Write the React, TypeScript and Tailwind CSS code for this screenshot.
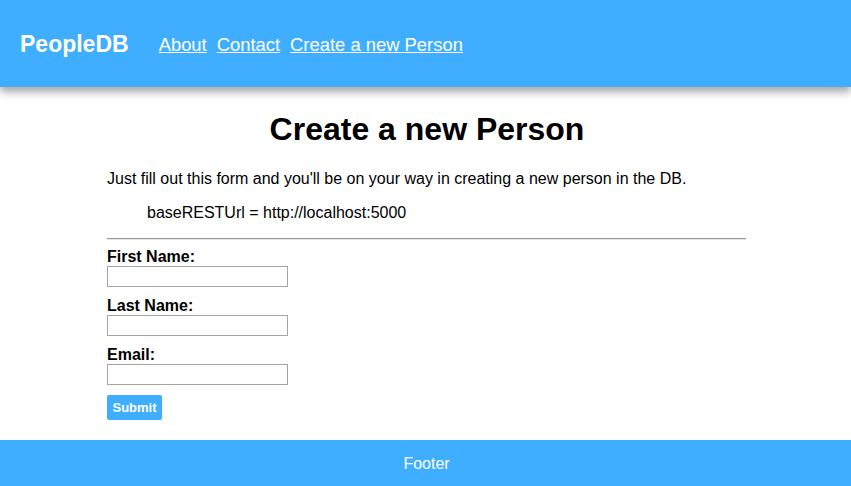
import React from 'react';

const App = () => {
  return <div className="min-h-screen bg-white text-black font-['Liberation_Sans',Arial,sans-serif]">
      <header className="relative z-10 h-[87px] bg-[#40aeff] flex items-center px-[20px] shadow-[0_5px_8px_rgba(0,0,0,0.35)]">
        <h1 className="text-[23px] font-bold text-white mr-[30px] pt-[1px]">PeopleDB</h1>
        <nav className="flex gap-[10px] text-[18.4px] text-white pt-[3px]">
          <a href="#" className="underline">About</a>
          <a href="#" className="underline">Contact</a>
          <a href="#" className="underline">Create a new Person</a>
        </nav>
      </header>
      <main className="w-[639px] ml-[107px] pt-[24px]">
        <h2 className="text-[32px] font-bold text-center leading-[37px] pl-[1px]">Create a new Person</h2>
        <p className="mt-[22px] text-[16px] leading-[18px]">
          Just fill out this form and you'll be on your way in creating a new person in the DB.
        </p>
        <p className="mt-[16px] ml-[40px] text-[16px] leading-[18px]">baseRESTUrl = http://localhost:5000</p>
        <hr className="mt-[16px] border-0 border-t border-t-[#9a9a9a] border-b border-b-[#e6e6e6]" />
        <form className="flex flex-col items-start" onSubmit={e => e.preventDefault()}>
          <label className="mt-[8px] font-bold text-[16px] leading-[18px]">First Name:</label>
          <input type="text" className="w-[181px] h-[21px] border border-[#a5a5a5] bg-white" />
          <label className="mt-[10px] font-bold text-[16px] leading-[18px]">Last Name:</label>
          <input type="text" className="w-[181px] h-[21px] border border-[#a5a5a5] bg-white" />
          <label className="mt-[10px] font-bold text-[16px] leading-[18px]">Email:</label>
          <input type="text" className="w-[181px] h-[21px] border border-[#a5a5a5] bg-white" />
          <button type="submit" className="mt-[10px] w-[55px] h-[25px] rounded-[2px] bg-[#40aeff] text-white text-[13px] font-bold">
            Submit
          </button>
        </form>
      </main>
      <footer className="mt-[20px] h-[46px] bg-[#40aeff] flex items-center justify-center text-white text-[16px] pt-[2px] pl-[2px]">
        Footer
      </footer>
    </div>;
};

export default App;
